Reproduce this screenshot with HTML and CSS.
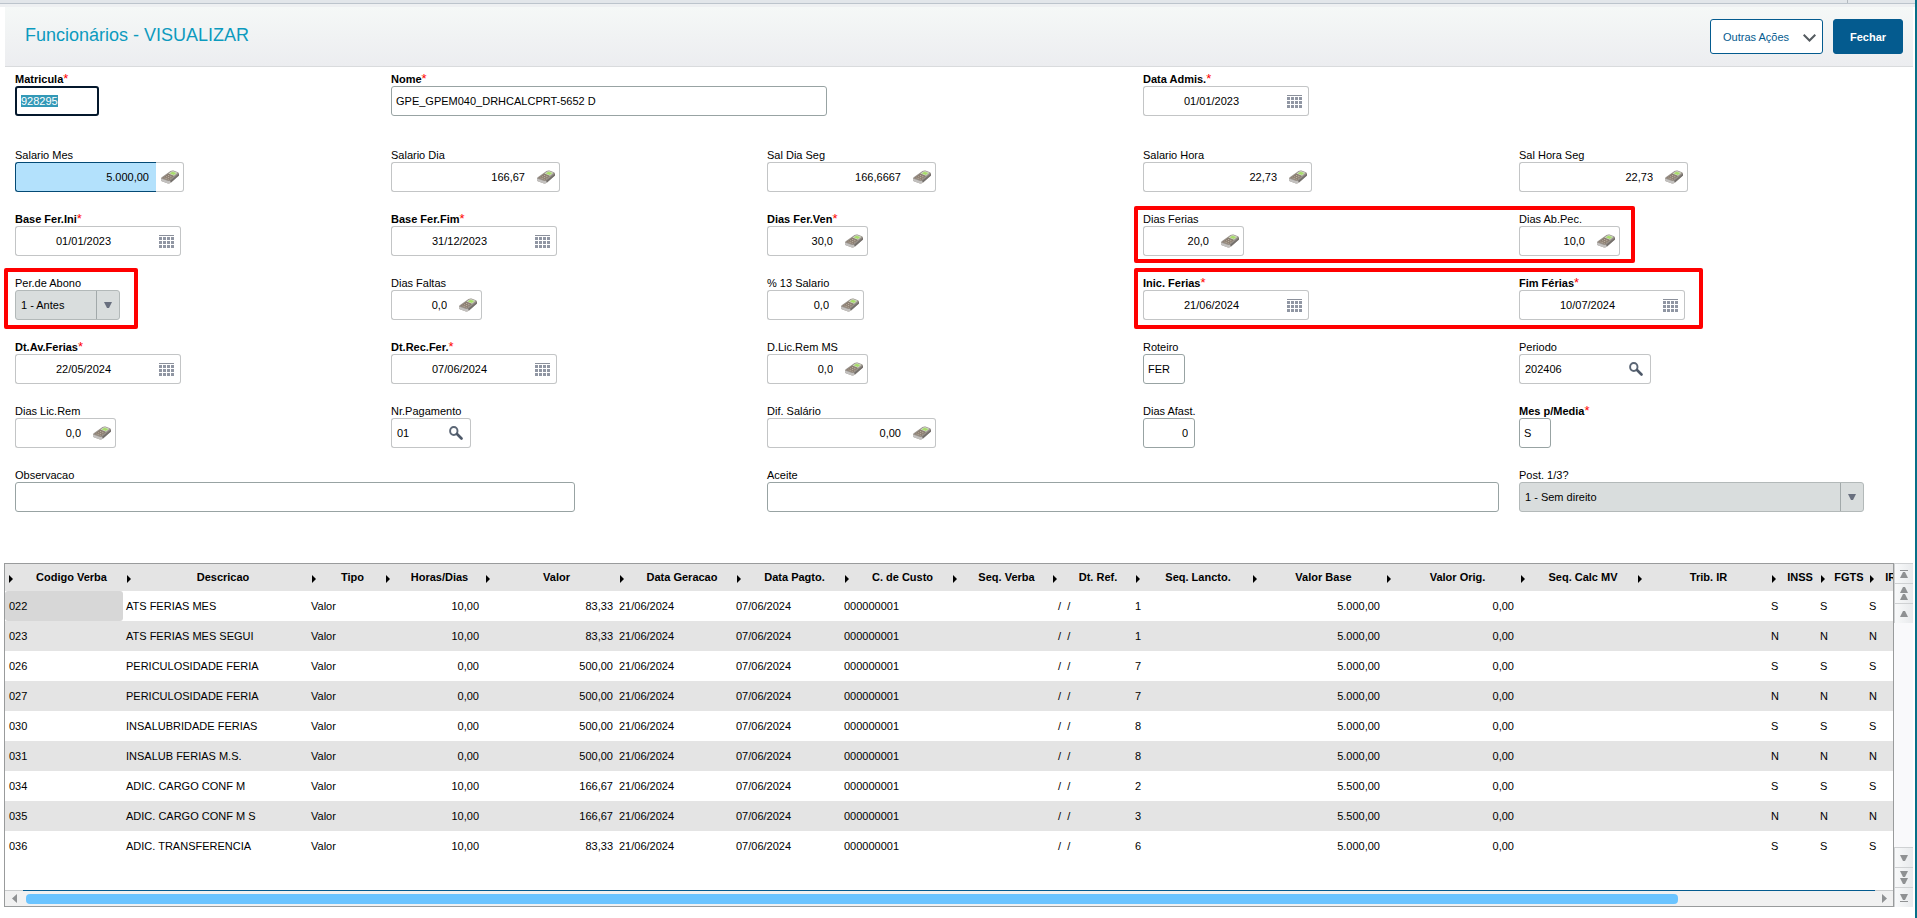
FILE: index.html
```html
<!DOCTYPE html>
<html lang="pt-br">
<head>
    <meta charset="UTF-8">
    <meta name="viewport" content="width=device-width, initial-scale=1.0">
    <title>Funcionários</title>
    <link rel="stylesheet" href="styles.css">
</head>
<body>
<svg class="sprite" aria-hidden="true">
    <symbol id="calc" viewBox="0 0 18 14">
        <path d="M0 8.5 Q0 7.5 1 7 L9.5 1 Q11 .2 12.500 .6 L17 2.200 Q18 2.800 18 4 V5.500 L10 12.500 Q8.500 13.800 7 13.400 L1.500 11.600 Q0 11 0 10 Z" fill="#9a938c"/>
        <path d="M0 8.500 L7 11 Q8.500 11.400 9.500 10.500 L10 12.500 Q8.500 13.800 7 13.400 L1.500 11.600 Q0 11 0 10 Z" fill="#c3c1bf"/>
        <path d="M9 10.800 L18 3.500 V5.500 L10 12.500 Z" fill="#74706c"/>
        <path d="M1.500 8 L7.500 3.600 L13 5.800 L8 10.200 Z" fill="#8a7d70"/>
        <path d="M7.500 3.500 L10.500 1.400 Q11.500 1 12.500 1.300 L16.500 2.800 L13 5.800 Z" fill="#d5dccb"/>
        <path d="M8.800 3.400 L11.300 1.800 L15.300 3.100 L12.900 5 Z" fill="#a8dc6a"/>
        <path d="M3.500 7.900 L7.800 9.400 M5.200 6.600 L9.600 8.200 M7 5.300 L11 6.900" stroke="#bcb0a2" stroke-width="1" stroke-dasharray="1.200 .7" fill="none"/>
    </symbol>
    <symbol id="cal" viewBox="0 0 15 13">
        <path d="M0 .5h15" stroke="#8b909b"/>
        <path d="M0 3.5h15M0 7.5h15M0 11.5h15" stroke="#9096a3" stroke-width="3" stroke-dasharray="3 1"/>
    </symbol>
    <symbol id="lupa" viewBox="0 0 14 14">
        <ellipse cx="4.800" cy="5" rx="3.700" ry="4" fill="none" stroke="#5b6675" stroke-width="1.900"/>
        <path d="M8 8 L12.500 12.500" stroke="#4d5868" stroke-width="2.600" stroke-linecap="round"/>
    </symbol>
    <symbol id="up" viewBox="0 0 8 6"><path d="M0 6 L3 0 H5 L8 6 Z" fill="#8f9193"/></symbol>
    <symbol id="down" viewBox="0 0 8 6"><path d="M0 0 H8 L5 6 H3 Z" fill="#8f9193"/></symbol>
    <symbol id="drop" viewBox="0 0 8 6"><path d="M0 0 H8 L5 6 H3 Z" fill="#69707f"/></symbol>
</svg>

<div class="window">
    <div class="tab-strip"><span class="tab-end"></span></div>

    <div class="header">
        <h1>Funcionários - VISUALIZAR</h1>
        <div class="actions">
            <button type="button" class="btn btn-outline">Outras Ações
                <svg width="13" height="8" viewBox="0 0 13 8"><path d="M.7 .7 L6.5 6.5 L12.300 .7" fill="none" stroke="#555b60" stroke-width="2"/></svg>
            </button>
            <button type="button" class="btn btn-primary">Fechar</button>
        </div>
    </div>

    <form class="form">
        <!-- Identificação -->
        <div class="row first">
            <div class="field">
                <label class="req" for="matricula">Matricula</label>
                <input class="text w84 current" id="matricula" type="text" value="928295">
            </div>
            <div class="field span2">
                <label class="req" for="nome">Nome</label>
                <input class="text nome" id="nome" type="text" value="GPE_GPEM040_DRHCALCPRT-5652 D">
            </div>
            <div class="field">
                <label class="req" for="admissao">Data Admis.</label>
                <div class="group date"><input id="admissao" type="text" value="01/01/2023"><button type="button" aria-label="Calendário"><svg class="cal"><use href="#cal"/></svg></button></div>
            </div>
        </div>

        <!-- Salários -->
        <div class="row">
            <div class="field">
                <label for="salmes">Salario Mes</label>
                <div class="group num w169"><input class="active" id="salmes" type="text" value="5.000,00"><button type="button" aria-label="Calculadora"><svg class="calc"><use href="#calc"/></svg></button></div>
            </div>
            <div class="field">
                <label for="saldia">Salario Dia</label>
                <div class="group num w169"><input id="saldia" type="text" value="166,67"><button type="button" aria-label="Calculadora"><svg class="calc"><use href="#calc"/></svg></button></div>
            </div>
            <div class="field">
                <label for="saldiaseg">Sal Dia Seg</label>
                <div class="group num w169"><input id="saldiaseg" type="text" value="166,6667"><button type="button" aria-label="Calculadora"><svg class="calc"><use href="#calc"/></svg></button></div>
            </div>
            <div class="field">
                <label for="salhora">Salario Hora</label>
                <div class="group num w169"><input id="salhora" type="text" value="22,73"><button type="button" aria-label="Calculadora"><svg class="calc"><use href="#calc"/></svg></button></div>
            </div>
            <div class="field">
                <label for="salhoraseg">Sal Hora Seg</label>
                <div class="group num w169"><input id="salhoraseg" type="text" value="22,73"><button type="button" aria-label="Calculadora"><svg class="calc"><use href="#calc"/></svg></button></div>
            </div>
        </div>

        <!-- Período aquisitivo -->
        <div class="row">
            <div class="field">
                <label class="req" for="baseini">Base Fer.Ini</label>
                <div class="group date"><input id="baseini" type="text" value="01/01/2023"><button type="button" aria-label="Calendário"><svg class="cal"><use href="#cal"/></svg></button></div>
            </div>
            <div class="field">
                <label class="req" for="basefim">Base Fer.Fim</label>
                <div class="group date"><input id="basefim" type="text" value="31/12/2023"><button type="button" aria-label="Calendário"><svg class="cal"><use href="#cal"/></svg></button></div>
            </div>
            <div class="field">
                <label class="req" for="diasven">Dias Fer.Ven</label>
                <div class="group num w101"><input id="diasven" type="text" value="30,0"><button type="button" aria-label="Calculadora"><svg class="calc"><use href="#calc"/></svg></button></div>
            </div>
            <div class="field mark mark-dias">
                <label for="diasferias">Dias Ferias</label>
                <div class="group num w101"><input id="diasferias" type="text" value="20,0"><button type="button" aria-label="Calculadora"><svg class="calc"><use href="#calc"/></svg></button></div>
            </div>
            <div class="field">
                <label for="diasabono">Dias Ab.Pec.</label>
                <div class="group num w101"><input id="diasabono" type="text" value="10,0"><button type="button" aria-label="Calculadora"><svg class="calc"><use href="#calc"/></svg></button></div>
            </div>
        </div>

        <div class="row">
            <div class="field mark mark-abono">
                <label for="perabono">Per.de Abono</label>
                <div class="combo w105"><select id="perabono"><option>1 - Antes</option></select><span class="arrow"><svg class="tri"><use href="#drop"/></svg></span></div>
            </div>
            <div class="field">
                <label for="faltas">Dias Faltas</label>
                <div class="group num w91"><input id="faltas" type="text" value="0,0"><button type="button" aria-label="Calculadora"><svg class="calc"><use href="#calc"/></svg></button></div>
            </div>
            <div class="field">
                <label for="perc13">% 13 Salario</label>
                <div class="group num w97"><input id="perc13" type="text" value="0,0"><button type="button" aria-label="Calculadora"><svg class="calc"><use href="#calc"/></svg></button></div>
            </div>
            <div class="field mark mark-ferias">
                <label class="req" for="inicferias">Inic. Ferias</label>
                <div class="group date"><input id="inicferias" type="text" value="21/06/2024"><button type="button" aria-label="Calendário"><svg class="cal"><use href="#cal"/></svg></button></div>
            </div>
            <div class="field">
                <label class="req" for="fimferias">Fim Férias</label>
                <div class="group date"><input id="fimferias" type="text" value="10/07/2024"><button type="button" aria-label="Calendário"><svg class="cal"><use href="#cal"/></svg></button></div>
            </div>
        </div>

        <div class="row">
            <div class="field">
                <label class="req" for="aviso">Dt.Av.Ferias</label>
                <div class="group date"><input id="aviso" type="text" value="22/05/2024"><button type="button" aria-label="Calendário"><svg class="cal"><use href="#cal"/></svg></button></div>
            </div>
            <div class="field">
                <label class="req" for="recibo">Dt.Rec.Fer.</label>
                <div class="group date"><input id="recibo" type="text" value="07/06/2024"><button type="button" aria-label="Calendário"><svg class="cal"><use href="#cal"/></svg></button></div>
            </div>
            <div class="field">
                <label for="licremms">D.Lic.Rem MS</label>
                <div class="group num w101"><input id="licremms" type="text" value="0,0"><button type="button" aria-label="Calculadora"><svg class="calc"><use href="#calc"/></svg></button></div>
            </div>
            <div class="field">
                <label for="roteiro">Roteiro</label>
                <input class="text w42" id="roteiro" type="text" value="FER">
            </div>
            <div class="field">
                <label for="periodo">Periodo</label>
                <div class="group w132"><input id="periodo" type="text" value="202406"><button type="button" aria-label="Pesquisar"><svg class="lupa"><use href="#lupa"/></svg></button></div>
            </div>
        </div>

        <div class="row">
            <div class="field">
                <label for="licrem">Dias Lic.Rem</label>
                <div class="group num w101"><input id="licrem" type="text" value="0,0"><button type="button" aria-label="Calculadora"><svg class="calc"><use href="#calc"/></svg></button></div>
            </div>
            <div class="field">
                <label for="nrpag">Nr.Pagamento</label>
                <div class="group w80"><input id="nrpag" type="text" value="01"><button type="button" aria-label="Pesquisar"><svg class="lupa"><use href="#lupa"/></svg></button></div>
            </div>
            <div class="field">
                <label for="difsal">Dif. Salário</label>
                <div class="group num w169"><input id="difsal" type="text" value="0,00"><button type="button" aria-label="Calculadora"><svg class="calc"><use href="#calc"/></svg></button></div>
            </div>
            <div class="field">
                <label for="afast">Dias Afast.</label>
                <input class="text right w52" id="afast" type="text" value="0">
            </div>
            <div class="field">
                <label class="req" for="mesmedia">Mes p/Media</label>
                <input class="text w32" id="mesmedia" type="text" value="S">
            </div>
        </div>

        <div class="row">
            <div class="field span2">
                <label for="obs">Observacao</label>
                <input class="text obs" id="obs" type="text">
            </div>
            <div class="field span2">
                <label for="aceite">Aceite</label>
                <input class="text aceite" id="aceite" type="text">
            </div>
            <div class="field">
                <label for="post">Post. 1/3?</label>
                <div class="combo post"><select id="post"><option>1 - Sem direito</option></select><span class="arrow"><svg class="tri"><use href="#drop"/></svg></span></div>
            </div>
        </div>
    </form>

    <!-- Verbas -->
    <div class="grid">
        <div class="grid-main">
            <div class="grid-view">
                <table>
                    <colgroup>
                        <col class="c118"><col class="c185"><col class="c74"><col class="c100"><col class="c134"><col class="c117">
                        <col class="c108"><col class="c108"><col class="c100"><col class="c83"><col class="c117"><col class="c134">
                        <col class="c134"><col class="c117"><col class="c134"><col class="c49"><col class="c49"><col class="c49">
                    </colgroup>
                    <thead>
                        <tr><th>Codigo Verba</th><th>Descricao</th><th>Tipo</th><th>Horas/Dias</th><th>Valor</th><th>Data Geracao</th><th>Data Pagto.</th><th>C. de Custo</th><th>Seq. Verba</th><th>Dt. Ref.</th><th>Seq. Lancto.</th><th>Valor Base</th><th>Valor Orig.</th><th>Seq. Calc MV</th><th>Trib. IR</th><th>INSS</th><th>FGTS</th><th>IRRF</th></tr>
                    </thead>
                    <tbody>
                        <tr><td class="sel">022</td><td>ATS FERIAS MES</td><td>Valor</td><td class="n">10,00</td><td class="n">83,33</td><td>21/06/2024</td><td>07/06/2024</td><td>000000001</td><td></td><td class="ref">  /  /</td><td>1</td><td class="n">5.000,00</td><td class="n">0,00</td><td></td><td></td><td>S</td><td>S</td><td>S</td></tr>
                        <tr><td>023</td><td>ATS FERIAS MES SEGUI</td><td>Valor</td><td class="n">10,00</td><td class="n">83,33</td><td>21/06/2024</td><td>07/06/2024</td><td>000000001</td><td></td><td class="ref">  /  /</td><td>1</td><td class="n">5.000,00</td><td class="n">0,00</td><td></td><td></td><td>N</td><td>N</td><td>N</td></tr>
                        <tr><td>026</td><td>PERICULOSIDADE FERIA</td><td>Valor</td><td class="n">0,00</td><td class="n">500,00</td><td>21/06/2024</td><td>07/06/2024</td><td>000000001</td><td></td><td class="ref">  /  /</td><td>7</td><td class="n">5.000,00</td><td class="n">0,00</td><td></td><td></td><td>S</td><td>S</td><td>S</td></tr>
                        <tr><td>027</td><td>PERICULOSIDADE FERIA</td><td>Valor</td><td class="n">0,00</td><td class="n">500,00</td><td>21/06/2024</td><td>07/06/2024</td><td>000000001</td><td></td><td class="ref">  /  /</td><td>7</td><td class="n">5.000,00</td><td class="n">0,00</td><td></td><td></td><td>N</td><td>N</td><td>N</td></tr>
                        <tr><td>030</td><td>INSALUBRIDADE FERIAS</td><td>Valor</td><td class="n">0,00</td><td class="n">500,00</td><td>21/06/2024</td><td>07/06/2024</td><td>000000001</td><td></td><td class="ref">  /  /</td><td>8</td><td class="n">5.000,00</td><td class="n">0,00</td><td></td><td></td><td>S</td><td>S</td><td>S</td></tr>
                        <tr><td>031</td><td>INSALUB FERIAS M.S.</td><td>Valor</td><td class="n">0,00</td><td class="n">500,00</td><td>21/06/2024</td><td>07/06/2024</td><td>000000001</td><td></td><td class="ref">  /  /</td><td>8</td><td class="n">5.000,00</td><td class="n">0,00</td><td></td><td></td><td>N</td><td>N</td><td>N</td></tr>
                        <tr><td>034</td><td>ADIC. CARGO CONF M</td><td>Valor</td><td class="n">10,00</td><td class="n">166,67</td><td>21/06/2024</td><td>07/06/2024</td><td>000000001</td><td></td><td class="ref">  /  /</td><td>2</td><td class="n">5.500,00</td><td class="n">0,00</td><td></td><td></td><td>S</td><td>S</td><td>S</td></tr>
                        <tr><td>035</td><td>ADIC. CARGO CONF M S</td><td>Valor</td><td class="n">10,00</td><td class="n">166,67</td><td>21/06/2024</td><td>07/06/2024</td><td>000000001</td><td></td><td class="ref">  /  /</td><td>3</td><td class="n">5.500,00</td><td class="n">0,00</td><td></td><td></td><td>N</td><td>N</td><td>N</td></tr>
                        <tr><td>036</td><td>ADIC. TRANSFERENCIA</td><td>Valor</td><td class="n">10,00</td><td class="n">83,33</td><td>21/06/2024</td><td>07/06/2024</td><td>000000001</td><td></td><td class="ref">  /  /</td><td>6</td><td class="n">5.000,00</td><td class="n">0,00</td><td></td><td></td><td>S</td><td>S</td><td>S</td></tr>
                    </tbody>
                </table>
            </div>
            <div class="hscroll">
                <button type="button" aria-label="Esquerda"><svg width="5" height="9" viewBox="0 0 5 9"><path d="M5 0 V9 L0 4.5 Z" fill="#8f9193"/></svg></button>
                <div class="track"><div class="thumb"></div></div>
                <button type="button" aria-label="Direita"><svg width="5" height="9" viewBox="0 0 5 9"><path d="M0 0 V9 L5 4.5 Z" fill="#8f9193"/></svg></button>
            </div>
        </div>
        <div class="nav">
            <button type="button" class="bar-top" aria-label="Primeiro"><svg class="ic"><use href="#up"/></svg></button>
            <button type="button" aria-label="Página acima"><svg class="ic"><use href="#up"/></svg><svg class="ic"><use href="#up"/></svg></button>
            <button type="button" aria-label="Acima"><svg class="ic"><use href="#up"/></svg></button>
            <div class="spacer"></div>
            <button type="button" aria-label="Abaixo"><svg class="ic"><use href="#down"/></svg></button>
            <button type="button" aria-label="Página abaixo"><svg class="ic"><use href="#down"/></svg><svg class="ic"><use href="#down"/></svg></button>
            <button type="button" class="bar-bottom" aria-label="Último"><svg class="ic"><use href="#down"/></svg></button>
        </div>
    </div>
</div>

<script>
    document.addEventListener("DOMContentLoaded", function () {
        let matricula = document.getElementById("matricula");
        matricula.focus();
        matricula.select();
    });
</script>
</body>
</html>
```
FILE: styles.css
```css
*, *::before, *::after {
    box-sizing: border-box;
}
body {
    margin: 0;
    background: #fff;
    color: #000;
    font-family: Arial, "Liberation Sans", sans-serif;
    font-size: 11px;
}
input, select, button {
    margin: 0;
    font-family: inherit;
    font-size: 11px;
    color: #000;
    outline: none;
}
button {
    cursor: pointer;
}
.sprite {
    display: none;
}
.window {
    min-height: 100vh;
    border-right: 2px solid #067088;
}

/* top */
.tab-strip {
    display: flex;
    justify-content: flex-end;
    height: 7px;
    border-bottom: 3px solid #eef0f2;
    background: linear-gradient(#e2e6ea 3px, #bcc4cc 3px);
}
.tab-end {
    width: 68px;
    height: 3px;
    border-left: 1px solid #b4bac0;
}
.header {
    display: flex;
    justify-content: space-between;
    align-items: center;
    margin: 0 2px 0 5px;
    padding: 12px 10px 12px 20px;
    border-bottom: 1px solid #d9dbdd;
    background: linear-gradient(#f5f8f7, #ecedf0);
}
.header h1 {
    margin: 0 0 2px;
    font-size: 18px;
    font-weight: normal;
    color: #0c9abe;
}
.actions {
    display: flex;
    gap: 10px;
}
.btn {
    height: 35px;
    border: 1px solid #045b8f;
    border-radius: 3px;
}
.btn-outline {
    display: flex;
    align-items: center;
    justify-content: space-between;
    width: 113px;
    padding: 0 6px 0 12px;
    background: #fff;
    color: #045b8f;
}
.btn-outline svg {
    margin-top: 2px;
}
.btn-primary {
    width: 70px;
    background: #045b8f;
    color: #fff;
    font-weight: bold;
}

/* form */
.form {
    display: flex;
    flex-direction: column;
    gap: 20px;
    padding: 5px 20px 0 15px;
}
.row {
    display: grid;
    grid-template-columns: repeat(5, 1fr);
}
.first {
    margin-bottom: 12px;
}
.field {
    position: relative;
}
.span2 {
    grid-column: span 2;
}
.field label {
    display: block;
    height: 14px;
    line-height: 14px;
}
.req {
    font-weight: bold;
}
.req::after {
    content: "*";
    color: #f00;
    font-size: 13px;
    font-weight: normal;
    line-height: 10px;
}
.text {
    display: block;
    height: 30px;
    padding: 0 4px;
    border: 1px solid #98a3a3;
    border-radius: 3px;
}
.text.right {
    text-align: right;
    padding-right: 6px;
}
.text.current {
    border: 2px solid #04182c;
}
.current::selection {
    background: #3399b7;
    color: #fff;
}
.group {
    display: flex;
    height: 30px;
}
.group input {
    flex: 1;
    min-width: 0;
    padding: 0 0 0 5px;
    border: 1px solid #c3c5c6;
    border-right: 0;
    border-radius: 3px 0 0 3px;
}
.group button {
    display: flex;
    align-items: center;
    justify-content: center;
    width: 28px;
    padding: 0;
    border: 1px solid #c3c5c6;
    border-left: 0;
    border-radius: 0 3px 3px 0;
    background: #fff;
}
.group.num input {
    padding: 0 7px 0 0;
    text-align: right;
}
.group.date {
    width: 166px;
}
.group.date input {
    padding: 0 2px 0 0;
    text-align: center;
}
.group input.active {
    border-color: #044a75;
    background: #b3e1fc;
}
.calc {
    width: 18px;
    height: 14px;
}
.cal {
    width: 15px;
    height: 13px;
}
.lupa {
    width: 14px;
    height: 14px;
    margin-right: 2px;
}
.combo {
    display: flex;
    height: 30px;
    border: 1px solid #b3b9b9;
    border-radius: 3px;
    background: #d9dddd;
}
.combo select {
    flex: 1;
    min-width: 0;
    padding: 0 5px;
    border: 0;
    background: none;
    appearance: none;
}
.arrow {
    display: flex;
    align-items: center;
    justify-content: center;
    width: 23px;
    border-left: 1px solid #a2a9aa;
}
.tri {
    width: 8px;
    height: 6px;
}
.w32 { width: 32px; }
.w42 { width: 42px; }
.w52 { width: 52px; }
.w80 { width: 80px; }
.w84 { width: 84px; }
.w91 { width: 91px; }
.w97 { width: 97px; }
.w101 { width: 101px; }
.w105 { width: 105px; }
.w132 { width: 132px; }
.w169 { width: 169px; }
.nome { width: 58%; }
.obs { width: 74.5%; }
.aceite { width: 97.3%; }
.post { width: 91.7%; }

/* red marks over the vacation fields */
.mark::before {
    content: "";
    position: absolute;
    top: -8px;
    bottom: -9px;
    left: -9px;
    border: 4px solid #f00;
    border-radius: 2px;
    pointer-events: none;
}
.mark-abono::before {
    left: -11px;
    width: 134px;
}
.mark-dias::before {
    top: -6px;
    bottom: -7px;
    right: -116px;
}
.mark-ferias::before {
    right: -184px;
}

/* grid */
.grid {
    display: flex;
    margin: 51px 2px 11px 4px;
}
.grid-main {
    flex: 1;
    min-width: 0;
    border: 1px solid #999b9c;
}
.grid-view {
    height: 326px;
    overflow: hidden;
}
table {
    width: 1910px;
    table-layout: fixed;
    border-collapse: collapse;
}
.c49 { width: 49px; }
.c74 { width: 74px; }
.c83 { width: 83px; }
.c100 { width: 100px; }
.c108 { width: 108px; }
.c117 { width: 117px; }
.c118 { width: 118px; }
.c134 { width: 134px; }
.c185 { width: 185px; }
th {
    position: relative;
    height: 27px;
    padding: 0 1px 2px 16px;
    background: #e4e4e4;
    white-space: nowrap;
}
th::before {
    content: "";
    position: absolute;
    top: 11px;
    left: 4px;
    border: 4px solid transparent;
    border-left-color: #000;
    border-right: 0;
}
td {
    height: 30px;
    padding: 0 3px;
    white-space: nowrap;
}
td:first-child {
    padding-left: 4px;
}
tbody tr:nth-child(even) {
    background: #e4e4e4;
}
.sel {
    background: #d7d7d7;
    border-radius: 3px;
}
.n {
    text-align: right;
}
.ref {
    white-space: pre;
}
.hscroll {
    display: flex;
    height: 16px;
    background: #f1f1f1;
}
.hscroll button {
    display: flex;
    align-items: center;
    justify-content: center;
    width: 18px;
    padding: 0;
    border: 0;
    border-top: 1px solid #c9cbcc;
    background: none;
}
.track {
    flex: 1;
    padding: 3px;
    border-top: 1px solid #045b8f;
}
.thumb {
    width: 89.5%;
    height: 10px;
    border-radius: 4px;
    background: #6bc4ff;
}
.nav {
    display: flex;
    flex-direction: column;
    width: 19px;
    background: #f9f9fb;
}
.nav button {
    display: flex;
    flex-direction: column;
    align-items: center;
    justify-content: center;
    gap: 1px;
    height: 20px;
    padding: 0;
    border: 1px solid #cfd1d3;
    border-width: 1px 0 0 1px;
    background: linear-gradient(90deg, #f8f9fa, #e8eaec);
}
.ic {
    width: 8px;
    height: 6px;
}
.spacer {
    flex: 1;
}
.bar-top::before, .bar-bottom::after {
    content: "";
    width: 8px;
    height: 1px;
    background: #8f9193;
}
```
